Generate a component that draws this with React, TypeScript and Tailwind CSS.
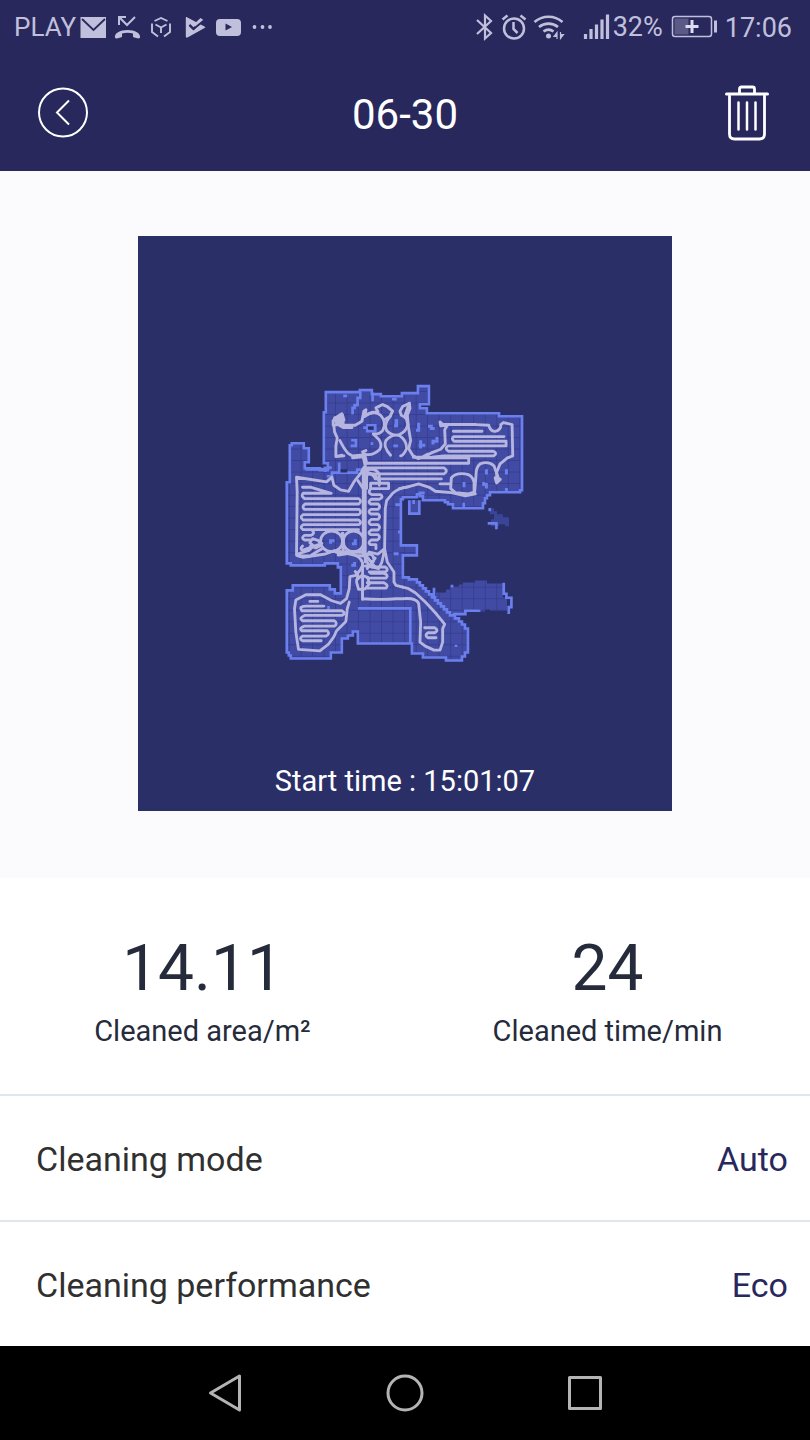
import React from "react";

function StatusBar() {
  return (
    <div className="flex h-[54px] items-center justify-between pl-[14px] pr-[18px] text-[#c1c0dc]">
      <div className="flex items-center">
        <span className="text-[26px] leading-8">PLAY</span>
        <svg className="ml-1 h-[54px] w-[196px]" viewBox="80 0 196 54" fill="none" aria-hidden="true">
          <rect x="80.500" y="17" width="25.500" height="21" fill="currentColor" />
          <path d="M82 19l11.500 11L105 19" stroke="#28285c" strokeWidth="1.800" />
          <path d="M119 25v-8h7M119 17l8 8 8-8" stroke="currentColor" strokeWidth="2" />
          <path d="M115 37.500c-1-4 5-7.500 12.500-7.500s13.500 3.500 12.500 7.500c-.3 1-1.500 1-3 .8l-4-1.300v-3.500c-3.500-1-7.500-1-11 0V37l-4 1.300c-1.500.3-2.700.2-3-.8z" fill="currentColor" />
          <g stroke="currentColor" strokeWidth="1.900">
            <path d="M154.500 21l6.500-3 6.500 3M152 23.500v8.500l6 4.500M170 23.500v8.500l-6 4.500M155.500 24.500l5.500 3 5.500-3M161 27.500v5.500" />
          </g>
          <path d="M186.500 17l18 9.500c1 .6 1 1 0 1.600l-17 9.500c-1 .4-1.700 0-1.700-1V18c0-1 .2-1.300.7-1z" fill="currentColor" />
          <path d="M189.500 25l4 4 8-8.500" stroke="#28285c" strokeWidth="2.200" />
          <path d="M194 24l6.500-6 3 2-8 8z" fill="currentColor" />
          <path d="M189.500 25l4 4 10.500-8.500" stroke="#28285c" strokeWidth="1.800" />
          <rect x="216" y="19" width="25" height="17" rx="4" fill="currentColor" />
          <path d="M225.500 23.500v7l6.500-3.500z" fill="#28285c" />
          <circle cx="254.500" cy="27" r="1.900" fill="currentColor" />
          <circle cx="262.500" cy="27" r="1.900" fill="currentColor" />
          <circle cx="270" cy="27" r="1.900" fill="currentColor" />
        </svg>
      </div>
      <div className="flex items-center">
        <svg className="h-[54px] w-[138px]" viewBox="476 0 138 54" fill="none" stroke="currentColor" aria-hidden="true">
          <path d="M478 20l14 13-6 5.500V15.500l6 5.500-14 13" strokeWidth="2.200" />
          <circle cx="515" cy="28.500" r="10" strokeWidth="2.500" />
          <path d="M514.500 22v7l4 4" strokeWidth="2.500" />
          <path d="M503.500 19.500l5-4M526.500 19.500l-5-4" strokeWidth="2.500" />
          <path d="M535.500 22c8-7 20-7 28 0M540 27c5.500-4.500 13.500-4.500 19 0M544.500 31.500c3-2.300 7-2.300 10 0" strokeWidth="2.600" />
          <circle cx="549.500" cy="36" r="2.500" fill="currentColor" stroke="none" />
          <path d="M558 32v7M558 32.500l-3 4h3zM561.500 32v7M561.500 38.500l3-4h-3z" strokeWidth="1.200" fill="currentColor" />
          <path d="M586.500 34v5M592 29v10M597.500 24.500V39M603 19.500V39M608.500 14.500V39" strokeWidth="3.200" />
        </svg>
        <span className="text-[27px] leading-8">32%</span>
        <svg className="ml-2 h-[54px] w-[48px]" viewBox="671 0 48 54" fill="none" aria-hidden="true">
          <rect x="672.500" y="16.500" width="39" height="20" rx="2.500" stroke="currentColor" strokeWidth="1.500" />
          <rect x="674.500" y="18.500" width="14" height="16" fill="#5b5a86" />
          <path d="M685.500 26.500h13M692 20v13" stroke="#dddcf0" strokeWidth="3" />
          <path d="M715.500 20.500v12" stroke="currentColor" strokeWidth="3" />
        </svg>
        <span className="ml-[6px] pt-[2px] text-[27px] leading-8">17:06</span>
      </div>
    </div>
  );
}

function Header() {
  return (
    <header className="bg-[#28285c] text-white">
      <StatusBar />
      <div className="grid h-[117px] grid-cols-[80px_1fr_80px] items-center px-6">
        <button type="button" aria-label="Back" className="ml-3 flex h-[54px] w-[54px] items-center justify-center justify-self-start">
          <svg viewBox="0 0 54 54" className="h-[54px] w-[54px]" fill="none" stroke="currentColor" aria-hidden="true">
            <circle cx="27" cy="26.500" r="24" strokeWidth="2" />
            <path d="M33 14.500L21 26.500l12 12" strokeWidth="2" />
          </svg>
        </button>
        <h1 className="pt-1 text-center text-[42px] leading-[48px]">06-30</h1>
        <button type="button" aria-label="Delete" className="mr-4 justify-self-end">
          <svg viewBox="0 0 46 58" className="h-[58px] w-[46px]" fill="none" stroke="currentColor" strokeLinecap="round" aria-hidden="true">
            <path d="M2.500 10h41" strokeWidth="3" />
            <path d="M15.500 9V5q0-2 2-2h11q2 0 2 2V9" strokeWidth="2.800" />
            <path d="M5.500 12v38q0 5 5 5h25q5 0 5-5V12" strokeWidth="2.800" />
            <path d="M14.500 18.500v27M23 18.500v27M31.500 18.500v27" strokeWidth="2.500" />
          </svg>
        </button>
      </div>
    </header>
  );
}

const FLOOR =
  "M326 392H360V390H372V394H381V396H402V393H418V386H429V404H420V408H427V413H499V416H522V490H520V492H490V495H487V498H485V503H483V508H453V504H448V502H445V500H423V496H420V494H417V497H403V499H401V545H417V555H403V577H409V579H417V582H420V585H423V588H426V591H429V594H432V597H435V600H438V603H441V606H444V609H447V612H450V615H455V618H459V621H462V624H465V628H468V652H465V656H462V660H446V657H423V653H412V643H358V631H353V635H348V638H342V652H331V658H291V655H289V652H287V590H293V585H330V589H335V593H341V567H338V563H325V565H291V563H287V482H290V445H292V443H304V448H309V462H305V468H320V470H328V463H324V412H326Z";

const ROOM =
  "M433 596H436V592H446V589H450V586H459V584H463V582H475V580H487V583H503V597H507V610H490V609H485V611H480V609H477V611H465V613H450Z";

const TO_DRAWING = "scale(3) translate(-275.4 -375)";

function CleaningMap() {
  return (
    <svg viewBox="-411 -417 1602 1560" className="block w-full" role="img" aria-label="Cleaned floor map">
      <defs>
        <pattern id="grid" width="34.500" height="34.500" patternUnits="userSpaceOnUse" patternTransform="translate(7 13)">
          <path d="M0 1.500H34.500M1.500 0V34.500" stroke="#353c8e" strokeWidth="2.500" />
        </pattern>
        <clipPath id="floorClip">
          <path d={FLOOR} transform={TO_DRAWING} />
          <path d={ROOM} transform={TO_DRAWING} />
        </clipPath>
      </defs>

      <g transform={TO_DRAWING} fill="#414ba4">
        <path d={ROOM} />
        <path d="M490 508h4v3h3v3h6v3h6v9h-4v-2h-6v2h-8v-7h3v-5h-4z" fill="#3b4598" />
        <path d="M409 500H419V514H409z" />
        <path d={FLOOR} />
      </g>
      <rect x="0" y="0" width="760" height="880" fill="url(#grid)" clipPath="url(#floorClip)" />
      <path d={FLOOR} transform={TO_DRAWING} fill="none" stroke="#6b80ee" strokeWidth="2.600" />

      <g fill="none" stroke="#6b80ee" strokeWidth="8">
        <path d="M292 52V78M255 50V68H247V90H238V98H232V118M204 62H216M350 72H364M192 262V292H170V303H155M192 292H246V283H275" />
        <path d="M264 157H277V150H300V168H276V158M228 195H242V212H226M286 205H294M354 212H368M362 132V152H356" />
        <path d="M278 154h16v9h-16zM196 282h20v10h-20z" fill="#2b2f69" stroke="none" />
        <g transform="translate(360 0)">
          <path d="M70 143V165H62M98 153H108V160H118M125 185V198H113V208M76 195V220M70 210H90M4 132V155M273 282V298M333 282V298M206 320V336M265 320V328H273V340M333 338V350M70 353H88" strokeWidth="9" />
        </g>
        <g transform="translate(0 270)">
          <path d="M90 12H160M150 20V4M166 235V226H178M240 222V235H230M238 290V300H228M360 118H375M368 200H380M355 265H370M165 3V12" strokeWidth="9" />
        </g>
        <g transform="translate(360 270)">
          <path d="M42 105V145H72V105M55 104V116M205 112V128" />
          <path d="M277 174H303V192M283 128V138" />
        </g>
        <path d="M160 692V702M248 699H405V803" />
        <g transform="translate(360 540)">
          <path d="M172 176H210V166H255M325 82V115H333V127H348V155H340V176M116 97V130M166 92H174M182 268V275" />
        </g>
      </g>

      <g fill="none" stroke="#b5b5e0" strokeWidth="8.500" strokeLinejoin="round" strokeLinecap="round">
        <path d="M230 157H204L188 148L174 150V136L190 122L200 116L206 134L198 140L180 134M184 140L200 150L240 150L260 138L266 108L272 104L268 120L290 112L308 110L302 98L322 88L336 94L352 108L344 124L330 132" strokeWidth="9" />
        <path d="M178 128L202 120L204 144L186 148z" fill="#b5b5e0" />
        <path d="M176 150L178 170L186 188L182 212L182 244L206 242M194 196L206 218L218 234L232 242L272 238M232 248L268 244L262 230L272 226M182 244L200 240" />
        <path d="M268 124Q296 104 316 120Q336 144 322 166Q312 178 294 176L310 192Q322 208 314 222Q296 240 276 238" />
        <path d="M346 122Q324 148 334 166Q350 184 372 178Q392 170 397 150Q400 130 378 120L374 108L382 94L402 84L390 118L398 150M346 240Q322 214 332 196Q352 174 374 182Q394 196 394 220Q386 240 376 242" />
        <path d="M402 84L404 100L396 120L400 160L406 196L400 220L412 240L428 250L450 244L470 232L496 222L510 206L508 164L516 150L496 152L494 140L502 148H602L640 150Q646 172 662 168Q678 162 676 148L684 142L710 148L712 242L696 248L674 266L664 290V310" />
        <path d="M668 306L656 272Q640 256 614 266Q602 276 602 298L598 350L580 356L540 352L526 340L528 308Q540 292 570 296Q590 298 596 320V350M494 326H526" />
        <path d="M660 308L674 312L664 322z" strokeWidth="10" />
        <path d="M414 246H440L458 236M534 168H620M686 184H536Q526 190 536 198H692V212H518Q506 220 520 228H654Q668 234 654 242H506L470 246L440 248H580V264H276M276 278H506Q520 287 506 296H280M300 311H498" />

        <path d="M268 236L274 262L264 280L258 292L236 320L220 348L196 344L176 330L170 306L154 320L64 306L66 350L64 540L84 546L150 536L178 526L240 540L266 542M264 280V540M270 290V560M264 246L274 290L300 300L314 320M274 300V340" />
        <path d="M272 284Q306 276 312 300V330M272 300Q290 290 300 310M248 316L264 340" />
        <path d="M82 336H108L168 354H84Q76 362 88 370H250Q262 378 250 386H90Q78 394 88 402H250Q262 410 250 418H84Q72 426 84 434H250Q262 442 250 448H84Q72 456 84 463H250M112 466Q120 474 108 480H88Q76 488 88 494H104" />
        <ellipse cx="169" cy="498" rx="33" ry="31" />
        <ellipse cx="235" cy="498" rx="31" ry="31" />
        <path d="M68 536Q84 530 100 526L116 512L104 502L112 490L130 496L138 510L122 518L106 512M82 512Q72 522 84 524L140 504M110 538L140 520M72 542H104" />
        <path d="M184 530H262M190 538L240 530M202 475L204 520" strokeWidth="11" />
        <path d="M338 324H286V340H340V324M286 340Q276 354 290 358H316Q326 366 312 372H288Q276 380 286 386H308Q318 394 308 402H288Q276 408 286 416H308Q318 424 308 432H288Q276 440 286 448H308Q318 456 308 464H288Q276 472 286 478H308Q318 486 306 494H288Q276 502 286 508H302V520" />
        <path d="M328 520L308 536L282 530L270 548L282 572L310 580L320 560L328 520M398 335Q370 338 352 354L334 376L330 400L328 520L336 560L356 590V620L362 630L382 635" />
        <path d="M266 540Q292 530 296 550Q296 570 270 572M276 580L300 548M268 536L300 575" />
        <path d="M372 340L398 335L430 326L462 336L480 348L528 352L570 362L600 356" />

        <path d="M240 540Q264 552 262 570L256 582L242 600L224 604L222 640L214 670L196 684L170 676L136 658H92L62 674L58 700L62 770L70 822L134 826L160 806L176 784L184 766L212 738L216 700L222 680" />
        <path d="M240 588L248 600L244 620L250 642L270 640L282 626L278 606L260 600L244 614M262 566V672" />
        <path d="M288 575H330Q342 582 330 590H282M286 594H326Q342 600 332 608H276M276 622H326Q342 630 332 638H276M262 640V670Q320 674 362 670H382Q422 666 430 684L436 740L434 800L450 812L476 824H494L502 800V760L508 746L480 712L450 680L420 652L400 640L382 635" />
        <path d="M104 678H128M146 692H92Q70 692 80 706H200Q214 714 200 720H88Q70 728 82 736H178Q188 744 178 752H88Q70 758 80 766H156Q166 776 152 782H82Q70 790 82 796H138" />
        <path d="M448 757H478Q492 764 478 772H458Q446 780 458 787H482" />
      </g>
    </svg>
  );
}

function Stat({ value, label }: { value: string; label: string }) {
  return (
    <div className="flex flex-col items-center">
      <dd className="order-1 text-[64px] leading-[72px]">{value}</dd>
      <dt className="order-2 mt-2 text-[29px] leading-9">{label}</dt>
    </div>
  );
}

function SettingRow({ label, value }: { label: string; value: string }) {
  return (
    <div className="flex h-[126px] items-center justify-between border-t-2 border-[#e0e6ee] pl-9 pr-[22px] pt-[2px] text-[34px] leading-10">
      <dt className="text-[#303030]">{label}</dt>
      <dd className="text-[#28285c]">{value}</dd>
    </div>
  );
}

function NavBar() {
  return (
    <nav className="flex grow items-center justify-center bg-black text-[#b4b4b4]">
      <div className="grid w-2/3 grid-cols-3 items-center justify-items-center">
        <button type="button" aria-label="Back">
          <svg className="h-10 w-10" viewBox="0 0 40 40" fill="none" stroke="currentColor" strokeWidth="3" strokeLinejoin="round" aria-hidden="true">
            <path d="M34.500 3v34L5.500 20z" />
          </svg>
        </button>
        <button type="button" aria-label="Home">
          <svg className="h-10 w-10" viewBox="0 0 40 40" fill="none" stroke="currentColor" strokeWidth="3" aria-hidden="true">
            <circle cx="20" cy="20" r="17" />
          </svg>
        </button>
        <button type="button" aria-label="Recent apps">
          <svg className="h-10 w-10" viewBox="0 0 40 40" fill="none" stroke="currentColor" strokeWidth="3" strokeLinejoin="round" aria-hidden="true">
            <rect x="4.500" y="4.500" width="31" height="31" />
          </svg>
        </button>
      </div>
    </nav>
  );
}

export default function App() {
  return (
    <div className="flex min-h-screen flex-col bg-white font-['Roboto',sans-serif]">
      <Header />
      <main>
        <section className="bg-[#fbfbfd] pb-[67px] pt-[65px]">
          <figure className="mx-auto w-[66%] bg-[#2b2f68]">
            <CleaningMap />
            <figcaption className="pb-3 pt-[6px] text-center text-[29px] leading-9 text-white">
              Start time : 15:01:07
            </figcaption>
          </figure>
        </section>
        <dl className="grid grid-cols-2 pb-[45px] pt-[55px] text-[#252b3b]">
          <Stat value="14.11" label="Cleaned area/m²" />
          <Stat value="24" label="Cleaned time/min" />
        </dl>
        <dl>
          <SettingRow label="Cleaning mode" value="Auto" />
          <SettingRow label="Cleaning performance" value="Eco" />
        </dl>
      </main>
      <NavBar />
    </div>
  );
}
